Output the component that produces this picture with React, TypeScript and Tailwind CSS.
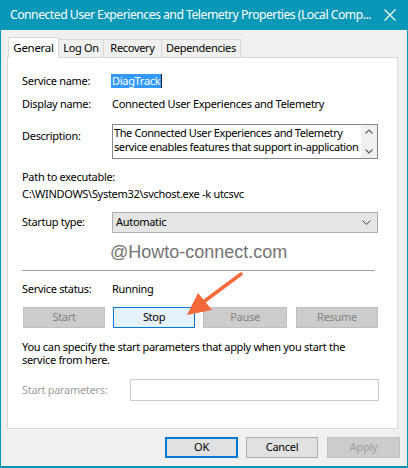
import React from "react";

const font = "font-['Segoe_UI','Noto_Sans',sans-serif]";

const Btn: React.FC<{ label: string; kind?: "normal" | "disabled" | "hot" | "default"; className?: string }> = ({
  label,
  kind = "normal",
  className = "",
}) => {
  const look =
    kind === "disabled"
      ? "bg-[#cccccc] border border-[#bfbfbf] text-[#838383]"
      : kind === "hot"
      ? "bg-[#e5f1fb] border border-[#0078d7] text-black"
      : kind === "default"
      ? "bg-[#e1e1e1] border-2 border-[#0078d7] text-black"
      : "bg-[#e1e1e1] border border-[#adadad] text-black";
  return (
    <div className={`h-[21px] flex items-center justify-center ${look} ${className}`}>{label}</div>
  );
};

export default function App() {
  return (
    <div className={`relative w-[408px] h-[468px] overflow-hidden bg-[#f0f0f0] border-x border-b-2 border-[#0797b7] text-[11px] tracking-[-0.3px] text-black ${font}`}>
      {/* title bar */}
      <div className="h-[30px] -mx-px bg-[#0797b7] flex items-center justify-between pl-[10px] pr-[12px] text-white">
        <span className="text-[12.2px] tracking-[-0.5px] whitespace-nowrap">
          Connected User Experiences and Telemetry Properties (Local Comp...
        </span>
        <svg width="12" height="12" viewBox="0 0 12 12" className="shrink-0 ml-2">
          <path d="M0.5 0.5 L11.5 11.5 M11.5 0.5 L0.5 11.5" stroke="white" strokeWidth="1.1" />
        </svg>
      </div>

      <div className="pl-[6px] pr-[8px] pt-[7px]">
        {/* tabs */}
        <div className="flex items-end h-[20px] relative z-10 pl-[1px] whitespace-nowrap">
          <div className="h-[21px] w-[51px] bg-white border border-b-0 border-[#d9d9d9] flex items-center justify-center text-[11.5px] -mb-px">
            General
          </div>
          <div className="h-[18px] w-[45px] bg-[#f0f0f0] border border-l-0 border-b-0 border-[#d9d9d9] flex items-center justify-center">
            Log On
          </div>
          <div className="h-[18px] w-[58px] bg-[#f0f0f0] border border-l-0 border-b-0 border-[#d9d9d9] flex items-center justify-center">
            Recovery
          </div>
          <div className="h-[18px] w-[79px] bg-[#f0f0f0] border border-l-0 border-b-0 border-[#d9d9d9] flex items-center justify-center">
            Dependencies
          </div>
        </div>

        {/* panel */}
        <div className="w-[391px] h-[372px] bg-white border border-[#d9d9d9] pl-[14px] pt-[16px]">
          <div className="flex h-[14px] items-center">
            <span className="w-[89px]">Service name:</span>
            <span className="bg-[#3399ff] text-white h-[14px] leading-[14px] px-px">DiagTrack</span>
            <span className="w-px h-[14px] bg-[#202020]" />
          </div>

          <div className="flex h-[14px] items-center mt-[9px]">
            <span className="w-[90px]">Display name:</span>
            <span>Connected User Experiences and Telemetry</span>
          </div>

          <div className="flex mt-[13px]">
            <span className="w-[90px] pt-[4px] leading-[16px]">Description:</span>
            <div className="w-[266px] h-[35px] border border-[#828790] flex">
              <div className="flex-1 pl-[1px] leading-[14px] pt-[1px] tracking-[-0.4px] overflow-hidden">
                The Connected User Experiences and Telemetry service enables features that support in-application
              </div>
              <div className="w-[16px] shrink-0 bg-[#f0f0f0] flex flex-col items-center justify-between py-[4px]">
                <svg width="8" height="5" viewBox="0 0 8 5">
                  <path d="M0.5 4.5 L4 1 L7.5 4.5" stroke="#606060" strokeWidth="1.2" fill="none" />
                </svg>
                <svg width="8" height="5" viewBox="0 0 8 5">
                  <path d="M0.5 0.5 L4 4 L7.5 0.5" stroke="#606060" strokeWidth="1.2" fill="none" />
                </svg>
              </div>
            </div>
          </div>

          <div className="mt-[10px] leading-[16px]">Path to executable:</div>
          <div className="mt-px leading-[16px]">C:\WINDOWS\System32\svchost.exe -k utcsvc</div>

          <div className="flex items-center mt-[10px]">
            <span className="w-[90px]">Startup type:</span>
            <div className="w-[266px] h-[21px] bg-[#e5e5e5] border border-[#adadad] flex items-center justify-between pl-[3px] pr-[6px]">
              <span>Automatic</span>
              <svg width="9" height="5" viewBox="0 0 9 5">
                <path d="M0.5 0.5 L4.5 4.5 L8.5 0.5" stroke="#404040" strokeWidth="1" fill="none" />
              </svg>
            </div>
          </div>

          <div className="h-[37px] flex items-center pl-[88px] pt-[2px] text-[18px] tracking-normal text-[#737373] font-['Liberation_Sans',sans-serif]">
            @Howto-connect.com
          </div>

          <div className="w-[353px] h-px bg-[#a0a0a0]" />

          <div className="flex items-center h-[16px] mt-[10px]">
            <span className="w-[90px]">Service status:</span>
            <span>Running</span>
          </div>

          <div className="flex mt-[10px] pl-px">
            <Btn label="Start" kind="disabled" className="w-[82px]" />
            <Btn label="Stop" kind="hot" className="w-[82px] ml-[8px]" />
            <Btn label="Pause" kind="disabled" className="w-[84px] ml-[8px]" />
            <Btn label="Resume" kind="disabled" className="w-[82px] ml-[9px]" />
          </div>

          <div className="mt-[12px] leading-[13px] w-[356px]">
            You can specify the start parameters that apply when you start the service from here.
          </div>

          <div className="flex items-center mt-[13px]">
            <span className="w-[108px] text-[#a0a0a0]">Start parameters:</span>
            <div className="w-[249px] h-[22px] border border-[#cccccc] bg-white" />
          </div>
        </div>

        {/* footer buttons */}
        <div className="flex justify-end mt-[8px] mr-[-1px]">
          <Btn label="OK" kind="default" className="w-[73px]" />
          <Btn label="Cancel" className="w-[72px] ml-[8px]" />
          <Btn label="Apply" kind="disabled" className="w-[73px] ml-[9px] text-[#a0a0a0]" />
        </div>
      </div>

      {/* orange annotation arrow */}
      <svg className="absolute left-0 top-0 pointer-events-none" width="408" height="468">
        <line x1="240" y1="274" x2="201" y2="303" stroke="#f4693a" strokeWidth="3.5" strokeLinecap="round" />
        <polygon points="186,315 197,293 211,310" fill="#f4693a" />
      </svg>
    </div>
  );
}
